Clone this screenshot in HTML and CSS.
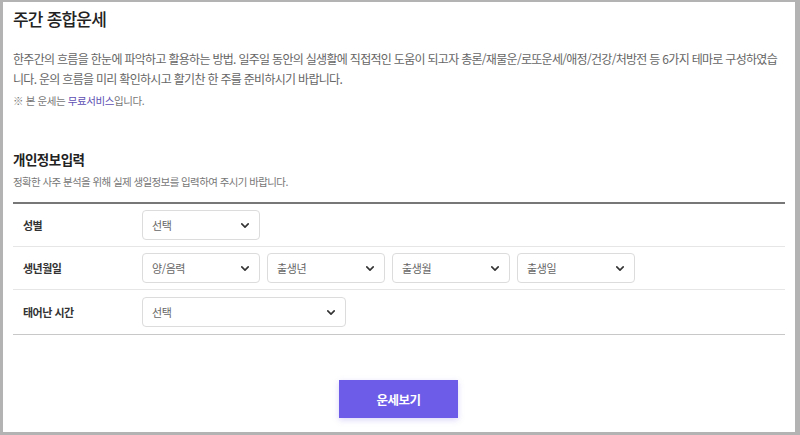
FILE: index.html
```html
<!DOCTYPE html>
<html lang="ko">
<head>
<meta charset="utf-8">
<link rel="stylesheet" href="styles.css">
</head>
<body>
<div class="frame">
  <h1 class="title">주간 종합운세</h1>
  <p class="desc">한주간의 흐름을 한눈에 파악하고 활용하는 방법. 일주일 동안의 실생활에 직접적인 도움이 되고자 총론/재물운/로또운세/애정/건강/처방전 등 6가지 테마로 구성하였습니다. 운의 흐름을 미리 확인하시고 활기찬 한 주를 준비하시기 바랍니다.</p>
  <p class="note">※ 본 운세는 <span class="free">무료서비스</span>입니다.</p>

  <h2 class="sub-title">개인정보입력</h2>
  <p class="sub-desc">정확한 사주 분석을 위해 실제 생일정보를 입력하여 주시기 바랍니다.</p>

  <div class="form">
    <div class="row">
      <div class="label">성별</div>
      <div class="fields">
        <div class="select w118"><span>선택</span><svg viewBox="0 0 10 6" class="chev"><path d="M1 1l4 4 4-4"/></svg></div>
      </div>
    </div>
    <div class="row">
      <div class="label">생년월일</div>
      <div class="fields">
        <div class="select w118"><span>양/음력</span><svg viewBox="0 0 10 6" class="chev"><path d="M1 1l4 4 4-4"/></svg></div>
        <div class="select w118"><span>출생년</span><svg viewBox="0 0 10 6" class="chev"><path d="M1 1l4 4 4-4"/></svg></div>
        <div class="select w118"><span>출생월</span><svg viewBox="0 0 10 6" class="chev"><path d="M1 1l4 4 4-4"/></svg></div>
        <div class="select w118"><span>출생일</span><svg viewBox="0 0 10 6" class="chev"><path d="M1 1l4 4 4-4"/></svg></div>
      </div>
    </div>
    <div class="row last">
      <div class="label">태어난 시간</div>
      <div class="fields">
        <div class="select w203"><span>선택</span><svg viewBox="0 0 10 6" class="chev"><path d="M1 1l4 4 4-4"/></svg></div>
      </div>
    </div>
  </div>

  <div class="actions">
    <button class="btn">운세보기</button>
  </div>
</div>
</body>
</html>
```
FILE: styles.css
```css
* { box-sizing: border-box; }
html, body { margin: 0; padding: 0; }
body {
  background: #b3b3b3;
  width: 800px;
  height: 435px;
  overflow: hidden;
  font-family: "Noto Sans CJK KR", "Noto Sans", sans-serif;
  padding: 2px 5px 3px 3px;
}
.frame {
  background: #fff;
  height: 430px;
  padding: 0 10px 0 10px;
  overflow: hidden;
}
.title {
  margin: 0;
  padding-top: 4px;
  height: 29px;
  font-size: 17px;
  font-weight: 500;
  color: #222;
  line-height: 25px;
  letter-spacing: -0.8px;
}
.desc {
  margin: 18px 0 0;
  max-width: 770px;
  font-size: 12px;
  line-height: 20px;
  color: #666;
  letter-spacing: -0.7px;
}
.note {
  margin: 4px 0 0;
  font-size: 10.5px;
  line-height: 16px;
  color: #777;
  letter-spacing: -0.4px;
}
.free { color: #5e4fb3; }
.sub-title {
  margin: 40px 0 0;
  font-size: 13.5px;
  font-weight: 700;
  color: #222;
  line-height: 20px;
  letter-spacing: -0.5px;
}
.sub-desc {
  margin: 5px 0 0;
  font-size: 10.5px;
  color: #777;
  line-height: 16px;
  letter-spacing: -0.6px;
}
.form {
  margin-top: 12px;
  border-top: 2px solid #777;
  border-bottom: 1px solid #c8c8c8;
  width: 772px;
}
.row {
  display: flex;
  align-items: center;
  height: 43px;
  border-bottom: 1px solid #e6e6e6;
}
.row.last { border-bottom: none; height: 44px; }
.label {
  width: 129px;
  padding-left: 10px;
  font-size: 11px;
  font-weight: 700;
  color: #333;
  letter-spacing: -0.5px;
}
.fields { display: flex; gap: 7px; }
.select {
  height: 30px;
  border: 1px solid #dcdcdc;
  border-radius: 4px;
  display: flex;
  align-items: center;
  justify-content: space-between;
  padding: 0 10px 0 9px;
  font-size: 11px;
  color: #666;
  background: #fff;
  letter-spacing: -0.4px;
}
.w118 { width: 118px; }
.w203 { width: 204px; }
.chev {
  width: 8px;
  height: 5px;
  fill: none;
  stroke: #333;
  stroke-width: 2;
  stroke-linecap: round;
  stroke-linejoin: round;
}
.actions {
  display: flex;
  justify-content: center;
  margin-top: 45px;
}
.btn {
  width: 119px;
  height: 38px;
  border: none;
  background: #6c5ce7;
  color: #fff;
  font-family: inherit;
  font-size: 12.5px;
  font-weight: 700;
  letter-spacing: -0.5px;
  box-shadow: 0 2px 6px rgba(108, 92, 231, 0.25);
  margin-left: -1px;
}
```
